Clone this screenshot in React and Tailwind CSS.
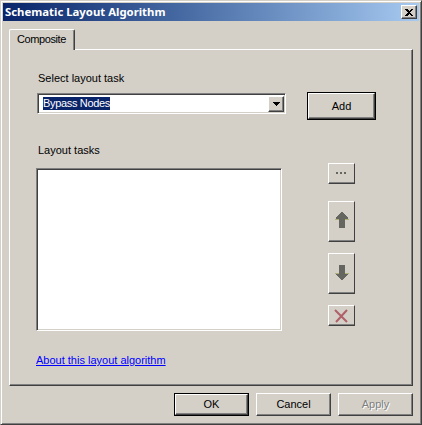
const raised = 'border border-t-white border-l-white border-r-[#404040] border-b-[#404040] shadow-[inset_-1px_-1px_0_#808080]';

function PushButton({ label, isDefault, disabled, className }) {
  return (
    <button
      className={`${className} flex items-center justify-center bg-[#d4d0c8] text-[11px] ${
        isDefault ? 'border border-black' : raised
      } ${disabled ? 'text-[#808080] [text-shadow:1px_1px_0_#fff]' : 'text-black'}`}
    >
      {isDefault ? (
        <span className={`${raised} flex h-full w-full items-center justify-center`}>{label}</span>
      ) : (
        label
      )}
    </button>
  );
}

function SideButton({ className, children }) {
  return (
    <button className={`${className} flex w-[27px] items-center justify-center bg-[#d4d0c8] border-t border-l border-t-white border-l-white border-r border-b border-r-[#404040] border-b-[#404040] shadow-[inset_0_-1px_0_#808080]`}>
      {children}
    </button>
  );
}

function ArrowUp() {
  return (
    <svg className="mb-[3px]" width="14" height="16" viewBox="0 0 14 16" shapeRendering="crispEdges">
      <rect x="0" y="7" width="14" height="1" fill="#b0b070" />
      <path d="M6 0H8V1H9V2H10V3H11V4H12V5H13V7H10V16H4V7H1V5H2V4H3V3H4V2H5V1H6Z" fill="#666660" />
    </svg>
  );
}

function ArrowDown() {
  return (
    <svg className="mb-px" width="14" height="16" viewBox="0 0 14 16" shapeRendering="crispEdges">
      <rect x="0" y="8" width="14" height="1" fill="#b0b070" />
      <path d="M4 0H10V9H13V10H12V11H11V12H10V13H9V14H8V15H6V14H5V13H4V12H3V11H2V10H1V9H4Z" fill="#666660" />
    </svg>
  );
}

export default function App() {
  return (
    <div className="flex h-[425px] w-[422px] flex-col border border-t-[#d4d0c8] border-l-[#d4d0c8] border-r-[#404040] border-b-[#404040] bg-[#d4d0c8] px-[2px] pt-[2px] font-['Liberation_Sans',sans-serif] text-[11px] text-black shadow-[inset_1px_1px_0_#fff,inset_-1px_-1px_0_#808080]">
      <div className="flex h-[18px] items-center justify-between bg-gradient-to-r from-[#0a246a] to-[#a6caf0] pl-[2px] pr-[2px]">
        <span className="font-['Noto_Sans',sans-serif] text-[11.35px] font-bold text-white">Schematic Layout Algorithm</span>
        <button className={`${raised} flex h-[14px] w-[16px] items-center justify-center bg-[#d4d0c8]`}>
          <svg width="8" height="7" viewBox="0 0 8 7" shapeRendering="crispEdges">
            <path d="M0 0H2L4 2 6 0H8V1L5 3.5 8 6V7H6L4 5 2 7H0V6L3 3.5 0 1Z" fill="#000" />
          </svg>
        </button>
      </div>

      <div className="ml-[6px] mr-[6px] mt-[8px] flex flex-col">
        <div className="relative z-10 -mb-px flex h-[21px] w-[66px] items-center rounded-t-[2px] border-t border-l border-r border-t-white border-l-white border-r-[#404040] bg-[#d4d0c8] pb-[2px] pl-[7px] tracking-[-0.4px] shadow-[inset_-1px_0_0_#808080]">
          Composite
        </div>

        <div className="flex h-[337px] flex-col border border-t-white border-l-white border-r-[#404040] border-b-[#404040] pl-[26px] shadow-[inset_-1px_-1px_0_#808080]">
          <div className="mt-[21px] h-[15px] pl-[2px] leading-[15px]">Select layout task</div>
          <div className="mt-[6px] flex items-start">
            <div className="ml-px mt-px flex h-[21px] w-[249px] items-center justify-between border border-t-[#808080] border-l-[#808080] border-r-white border-b-white bg-white pl-[5px] pr-px shadow-[inset_1px_1px_0_#404040,inset_-1px_-1px_0_#d4d0c8]">
              <span className="bg-[#0a246a] leading-[13px] tracking-[-0.33px] text-white">Bypass Nodes</span>
              <div className={`${raised} flex h-[16px] w-[16px] items-center justify-center bg-[#d4d0c8]`}>
                <svg width="7" height="4" viewBox="0 0 7 4" shapeRendering="crispEdges">
                  <path d="M0 0H7L3.5 4Z" fill="#000" />
                </svg>
              </div>
            </div>
            <PushButton label="Add" isDefault className="ml-[21px] h-[28px] w-[69px]" />
          </div>

          <div className="flex">
            <div className="flex w-[246px] flex-col">
              <div className="mt-[23px] h-[15px] pl-[2px] leading-[15px]">Layout tasks</div>
              <div className="mt-[10px] h-[163px] border border-t-[#808080] border-l-[#808080] border-r-white border-b-white bg-white shadow-[inset_1px_1px_0_#404040,inset_-1px_-1px_0_#d4d0c8]" />
            </div>
            <div className="ml-[46px] mt-[43px] flex flex-col">
              <SideButton className="h-[21px]">
                <svg width="11" height="3" viewBox="0 0 11 3" shapeRendering="crispEdges">
                  <path d="M0 0H2V2H0ZM4 0H6V2H4ZM8 0H10V2H8Z" fill="#666660" />
                </svg>
              </SideButton>
              <SideButton className="mt-[17px] h-[41px]">
                <ArrowUp />
              </SideButton>
              <SideButton className="mt-[11px] h-[41px]">
                <ArrowDown />
              </SideButton>
              <SideButton className="mt-[11px] h-[21px]">
                <svg width="15" height="14" viewBox="0 0 15 14">
                  <path d="M1 1 13 13M13 1 2 13" stroke="#b06068" strokeWidth="2" fill="none" />
                </svg>
              </SideButton>
            </div>
          </div>

          <a className="mt-[22px] h-[15px] w-fit leading-[15px] text-[#0000ff] underline">About this layout algorithm</a>
        </div>
      </div>

      <div className="mr-[6px] mt-[7px] flex justify-end gap-[7px]">
        <PushButton label="OK" isDefault className="h-[23px] w-[75px]" />
        <PushButton label="Cancel" className="h-[23px] w-[75px]" />
        <PushButton label="Apply" disabled className="h-[23px] w-[75px]" />
      </div>
    </div>
  );
}
